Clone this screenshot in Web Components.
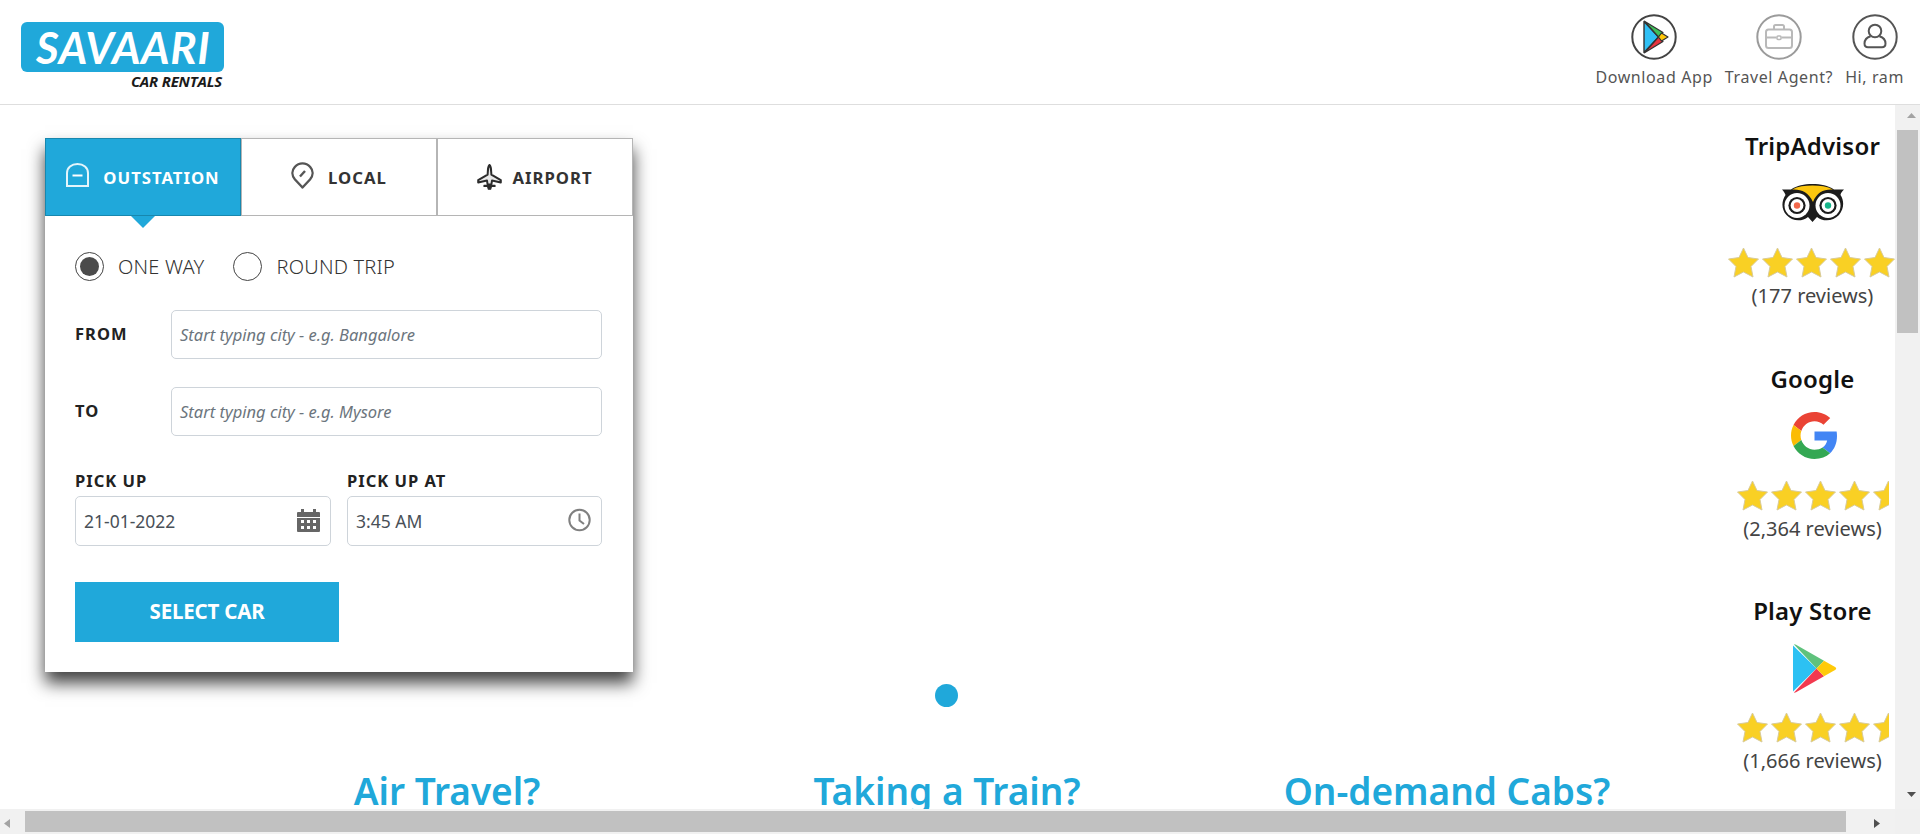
<!DOCTYPE html>
<html>
<head>
<meta charset="utf-8">
<title>Savaari Car Rentals</title>
<style>
  html, body { margin: 0; height: 100%; overflow: hidden; background: #fff; }
  body { font-family: "Noto Sans", "Open Sans", sans-serif; color: #444; }
</style>
</head>
<body>
<page-shell>
  <site-header slot="header">
    <nav-item label="Download App">
      <svg viewBox="0 0 46 46" width="46" height="46">
        <circle cx="23" cy="23" r="21.7" fill="#fff" stroke="#444" stroke-width="2"/>
        <path d="M13 7.5 L13 38.5 L27.5 23Z" fill="#2fc0f5" stroke="#333" stroke-width="1.4" stroke-linejoin="round"/>
        <path d="M13.5 7.2 L27.5 23 L32 18.4Z" fill="#3fc15a" stroke="#333" stroke-width="1.2" stroke-linejoin="round"/>
        <path d="M13.5 38.8 L27.5 23 L32 27.6Z" fill="#e8343f" stroke="#333" stroke-width="1.2" stroke-linejoin="round"/>
        <path d="M30.5 19 L37 23 L30.5 27 L27.5 23Z" fill="#ffc80a" stroke="#333" stroke-width="1.2" stroke-linejoin="round"/>
      </svg>
    </nav-item>
    <nav-item label="Travel Agent?">
      <svg viewBox="0 0 46 46" width="46" height="46" fill="none" stroke="#b9b9b9" stroke-width="2">
        <circle cx="23" cy="23" r="21.7" stroke="#9b9b9b"/>
        <rect x="10" y="15.5" width="26" height="18.5" rx="2.5"/>
        <path d="M18 15.5 v-3 a1.5 1.5 0 0 1 1.5 -1.5 h7 a1.5 1.5 0 0 1 1.5 1.5 v3"/>
        <path d="M10 23.5 h10.5 M25.5 23.5 h10.5"/>
        <rect x="21" y="22" width="4" height="3.5" rx="1" stroke-width="1.5"/>
      </svg>
    </nav-item>
    <nav-item label="Hi, ram">
      <svg viewBox="0 0 46 46" width="46" height="46" fill="none" stroke="#555" stroke-width="2">
        <circle cx="23" cy="23" r="21.7"/>
        <circle cx="23" cy="17" r="6.3"/>
        <path d="M18.6 22.3 C14.5 23.6 12.5 26.6 12.5 29.5 C12.5 32 14 33.2 16 33.2 H30 C32 33.2 33.5 32 33.5 29.5 C33.5 26.6 31.5 23.6 27.4 22.3"/>
      </svg>
    </nav-item>
  </site-header>

  <hero-area slot="main">
    <booking-card></booking-card>
    <slide-dot></slide-dot>
    <promo-row>
      <promo-title>Air Travel?</promo-title>
      <promo-title>Taking a Train?</promo-title>
      <promo-title>On-demand Cabs?</promo-title>
    </promo-row>
  </hero-area>

  <review-column slot="side">
    <review-card title-text="TripAdvisor" count="(177 reviews)" rating="5" stars-width="170">
      <svg viewBox="0 0 62 38" width="62" height="38">
        <path d="M0 5.5 H9 C15 1.5 22 0 30.5 0 C39 0 46 1.5 52 5.5 H62 C59.5 8 58.5 10 58.5 11 C62.5 17 62 25 57 31 C51 37.5 41 38 35 33 L30.5 38 L26 33 C20 38 10 37.5 4.5 31 C-1 25 -.5 17 3.5 11 C3 9.5 2 7.5 0 5.5Z" fill="#1c1c1c"/>
        <path d="M10 5.6 C16 2.5 23 1.6 30.5 1.6 C38 1.6 45 2.5 51 5.6 C42 5 35 8 31 18 C26.5 8 19 5 10 5.6Z" fill="#fcc60f"/>
        <circle cx="15" cy="21.5" r="12.5" fill="#fff"/>
        <circle cx="46" cy="21.5" r="12.5" fill="#fff"/>
        <circle cx="15" cy="21.5" r="8.6" fill="#1c1c1c"/>
        <circle cx="46" cy="21.5" r="8.6" fill="#1c1c1c"/>
        <circle cx="15" cy="21.5" r="6.4" fill="#fff"/>
        <circle cx="46" cy="21.5" r="6.4" fill="#fff"/>
        <circle cx="15" cy="21.5" r="3.2" fill="#f2674a"/>
        <circle cx="46" cy="21.5" r="3.2" fill="#17b58a"/>
      </svg>
    </review-card>
    <review-card title-text="Google" count="(2,364 reviews)" rating="4.5" stars-width="152">
      <svg viewBox="0 0 48 48" width="47" height="47" style="margin-left:4px">
        <path fill="#EA4335" d="M24 9.5c3.54 0 6.71 1.22 9.21 3.6l6.85-6.85C35.9 2.38 30.47 0 24 0 14.62 0 6.51 5.38 2.56 13.22l7.98 6.19C12.43 13.72 17.74 9.5 24 9.5z"/>
        <path fill="#4285F4" d="M46.98 24.55c0-1.57-.15-3.09-.38-4.55H24v9.02h12.94c-.58 2.96-2.26 5.48-4.78 7.18l7.73 6c4.51-4.18 7.09-10.36 7.09-17.65z"/>
        <path fill="#FBBC05" d="M10.53 28.59c-.5-1.45-.78-2.99-.78-4.59s.27-3.14.78-4.59l-7.98-6.19C.92 16.46 0 20.12 0 24c0 3.88.92 7.54 2.56 10.78l7.97-6.19z"/>
        <path fill="#34A853" d="M24 48c6.48 0 11.93-2.13 15.89-5.81l-7.73-6c-2.15 1.45-4.92 2.3-8.16 2.3-6.26 0-11.57-4.22-13.47-9.91l-7.98 6.19C6.51 42.62 14.62 48 24 48z"/>
      </svg>
    </review-card>
    <review-card title-text="Play Store" count="(1,666 reviews)" rating="4.5" stars-width="152">
      <svg viewBox="0 0 44 49" width="44" height="49" style="margin-left:4px">
        <path d="M0 1.5 V47.5 L23.5 24.5Z" fill="#2cc1f3"/>
        <path d="M1 .5 Q1.5 0 3 .8 L31 16.8 L23.5 24.5Z" fill="#5fc27c"/>
        <path d="M1 48.5 Q1.5 49 3 48.2 L31 32.2 L23.5 24.5Z" fill="#f2394f"/>
        <path d="M31 16.8 L42.5 23.3 Q44 24.5 42.5 25.7 L31 32.2 L23.5 24.5Z" fill="#ffca0a"/>
      </svg>
    </review-card>
  </review-column>

  <scroll-bar slot="vbar" orient="v"></scroll-bar>
  <scroll-bar slot="hbar" orient="h"></scroll-bar>
</page-shell>

<script>
const BLUE = '#20a8da';

class PageShell extends HTMLElement {
  shadowRoot = this.attachShadow({ mode: 'open' });

  connectedCallback() {
    this.shadowRoot.innerHTML = `
      <style>
        :host {
          display: grid;
          grid-template-columns: 1fr 25px;
          grid-template-rows: 105px 704px 25px;
          height: 834px;
          width: 1920px;
        }
        .head { grid-column: 1 / 3; }
        .main { display: flex; overflow: hidden; }
        .corner { background: #f0f0f0; }
      </style>
      <div class="head"><slot name="header"></slot></div>
      <div class="main"><slot name="main"></slot><slot name="side"></slot></div>
      <slot name="vbar"></slot>
      <slot name="hbar"></slot>
      <div class="corner"></div>
    `;
  }
}

class SiteHeader extends HTMLElement {
  shadowRoot = this.attachShadow({ mode: 'open' });

  connectedCallback() {
    this.shadowRoot.innerHTML = `
      <style>
        :host {
          display: flex;
          justify-content: space-between;
          height: 104px;
          border-bottom: 1px solid #dedede;
          box-sizing: content-box;
        }
        .logo { padding: 22px 0 0 21px; width: 204px; }
        .badge {
          height: 50px;
          width: 203px;
          box-sizing: border-box;
          padding-left: 15px;
          background: ${BLUE};
          border-radius: 6px;
          color: #fff;
          font: italic 700 44px/50px Lato, "Open Sans", sans-serif;
          letter-spacing: .6px;
          white-space: nowrap;
        }
        .sub {
          text-align: right;
          padding: 0 3px 0 0;
          color: #1a1a1a;
          font: italic 700 15px/18px "Open Sans", sans-serif;
          letter-spacing: -.2px;
        }
        nav { display: flex; gap: 12px; padding: 14px 16px 0 0; align-items: flex-start; }
      </style>
      <div class="logo">
        <div class="badge">SAVAARI</div>
        <div class="sub">CAR RENTALS</div>
      </div>
      <nav><slot></slot></nav>
    `;
  }
}

class NavItem extends HTMLElement {
  shadowRoot = this.attachShadow({ mode: 'open' });

  connectedCallback() {
    this.shadowRoot.innerHTML = `
      <style>
        :host { display: flex; flex-direction: column; align-items: center; }
        .icon { height: 46px; display: flex; }
        .label {
          margin-top: 5px;
          font-size: 16px;
          line-height: 24px;
          letter-spacing: .6px;
          color: #555;
          white-space: nowrap;
        }
      </style>
      <div class="icon"><slot></slot></div>
      <div class="label">${this.getAttribute('label')}</div>
    `;
  }
}

class HeroArea extends HTMLElement {
  shadowRoot = this.attachShadow({ mode: 'open' });

  connectedCallback() {
    this.shadowRoot.innerHTML = `
      <style>
        :host {
          display: flex;
          flex-direction: column;
          flex: none;
          width: 1730px;
          padding-top: 33px;
          box-sizing: border-box;
        }
        ::slotted(*) { flex: none; }
      </style>
      <slot></slot>
    `;
  }
}

class BookingCard extends HTMLElement {
  shadowRoot = this.attachShadow({ mode: 'open' });

  connectedCallback() {
    this.shadowRoot.innerHTML = `
      <style>
        :host {
          display: block;
          width: 588px;
          margin-left: 45px;
          background: #fff;
          box-shadow: 0 11px 16px rgba(0, 0, 0, .75);
        }
        .tabs { display: grid; grid-template-columns: repeat(3, 1fr); height: 78px; }
        .body { padding: 36px 31px 30px 30px; display: flex; flex-direction: column; }
        .radios { display: flex; gap: 13px; height: 29px; margin-bottom: 29px; }
        .city { margin-bottom: 28px; }
        .when { display: grid; grid-template-columns: 256px 255px; gap: 16px; margin-top: 7px; }
        .submit {
          margin-top: 36px;
          width: 264px;
          height: 60px;
          background: ${BLUE};
          color: #fff;
          font-size: 20.5px;
          font-weight: 700;
          line-height: 58px;
          text-align: center;
          letter-spacing: -.2px;
        }
      </style>
      <div class="tabs">
        <booking-tab active label="OUTSTATION" gap="14">
          <svg viewBox="0 0 23 24" width="23" height="24" fill="none" stroke="#e4f5fb" stroke-width="2" style="margin-top:-5px">
            <path d="M1 23 V10 C1 4.5 5.5 1 11.5 1 C17.5 1 22 4.5 22 10 V23Z"/>
            <path d="M6.5 12.5 H16.5" stroke="#fff"/>
          </svg>
        </booking-tab>
        <booking-tab label="LOCAL" gap="14">
          <svg viewBox="0 0 23 27" width="23" height="27" fill="none" stroke="#555" stroke-width="2.4" style="margin-top:-3px">
            <path d="M11.5 25.5 L4 17.5 C.6 13.5 .6 8.5 3.8 5 C8 .2 15 .2 19.2 5 C22.4 8.5 22.4 13.5 19 17.5Z" stroke-linejoin="round"/>
            <path d="M9 14.5 L14 9" stroke-width="2.4"/>
          </svg>
        </booking-tab>
        <booking-tab label="AIRPORT" gap="10">
          <svg viewBox="0 0 25 26" width="25" height="26" fill="#e8e8e8" stroke="#2c2c2c" stroke-width="2" stroke-linejoin="round" style="margin-top:-1px">
            <path d="M12.5 1 C13.8 2.5 14.2 5 14.2 8 L14.4 10.6 L23.8 16.2 V18.6 L15 16.6 L14.4 20.4 H10.6 L10 16.6 L1.2 18.6 V16.2 L10.6 10.6 L10.8 8 C10.8 5 11.2 2.5 12.5 1Z"/>
            <path d="M7 21.4 H18 V22.4 H14.5 L13.6 25.2 H11.4 L10.5 22.4 H7Z" fill="#2c2c2c" stroke-width="1.2"/>
          </svg>
        </booking-tab>
      </div>
      <div class="body">
        <div class="radios">
          <radio-option checked label="ONE WAY"></radio-option>
          <radio-option label="ROUND TRIP"></radio-option>
        </div>
        <city-field class="city" label="FROM" placeholder="Start typing city - e.g. Bangalore"></city-field>
        <city-field class="city" label="TO" placeholder="Start typing city - e.g. Mysore"></city-field>
        <div class="when">
          <date-field label="PICK UP" value="21-01-2022">
            <svg viewBox="0 0 23 24" width="23" height="24" fill="#666">
              <path d="M4 1 h3 v3 h9 v-3 h3 v3 h3 a1 1 0 0 1 1 1 v4 H0 V5 a1 1 0 0 1 1 -1 h3Z"/>
              <path fill-rule="evenodd" d="M0 10 H23 V23 a1 1 0 0 1 -1 1 H1 a1 1 0 0 1 -1 -1Z M4 12 v3 h3 v-3Z M10 12 v3 h3 v-3Z M16 12 v3 h3 v-3Z M4 18 v3 h3 v-3Z M10 18 v3 h3 v-3Z M16 18 v3 h3 v-3Z"/>
            </svg>
          </date-field>
          <date-field label="PICK UP AT" value="3:45 AM">
            <svg viewBox="0 0 23 24" width="23" height="24" fill="none" stroke="#808080" stroke-width="2">
              <circle cx="11.5" cy="12" r="10.2"/>
              <path d="M11.5 5.5 V12.5 L16 16"/>
            </svg>
          </date-field>
        </div>
        <div class="submit">SELECT CAR</div>
      </div>
    `;
  }
}

class BookingTab extends HTMLElement {
  shadowRoot = this.attachShadow({ mode: 'open' });

  connectedCallback() {
    const gap = this.getAttribute('gap');
    this.shadowRoot.innerHTML = `
      <style>
        :host {
          position: relative;
          display: flex;
          align-items: center;
          justify-content: center;
          gap: ${gap}px;
          box-sizing: border-box;
          border: 1px solid #b5b5b5;
          color: #333;
          font-size: 16.7px;
          font-weight: 700;
          letter-spacing: 1px;
        }
        :host([active]) {
          background: ${BLUE};
          border-color: #1787ae;
          color: #fff;
        }
        /* the little pointer under the active tab */
        :host([active])::after {
          content: "";
          position: absolute;
          left: 50%;
          bottom: -13px;
          margin-left: -12px;
          border: solid transparent;
          border-width: 12px 12px 0;
          border-top-color: ${BLUE};
        }
        ::slotted(svg) { display: block; }
      </style>
      <slot></slot><span>${this.getAttribute('label')}</span>
    `;
  }
}

class RadioOption extends HTMLElement {
  shadowRoot = this.attachShadow({ mode: 'open' });

  connectedCallback() {
    this.shadowRoot.innerHTML = `
      <style>
        :host {
          display: flex;
          align-items: center;
          gap: 14px;
          font-size: 20px;
          font-weight: 300;
          letter-spacing: .2px;
          color: #333;
          white-space: nowrap;
          margin-right: 16px;
        }
        .ring {
          width: 29px;
          height: 29px;
          box-sizing: border-box;
          border: 1px solid #444;
          border-radius: 50%;
          padding: 4px;
          background-clip: content-box;
        }
        :host([checked]) .ring { background-color: #4b4b4b; }
      </style>
      <div class="ring"></div><span>${this.getAttribute('label')}</span>
    `;
  }
}

const fieldBox = `
  .box {
    display: flex;
    align-items: center;
    justify-content: space-between;
    box-sizing: border-box;
    border: 1px solid #ced4da;
    border-radius: 5px;
    padding: 0 10px 0 8px;
    background: #fff;
  }
  .label { font-size: 16.5px; font-weight: 700; letter-spacing: 1px; color: #222; white-space: nowrap; }
`;

class CityField extends HTMLElement {
  shadowRoot = this.attachShadow({ mode: 'open' });

  connectedCallback() {
    this.shadowRoot.innerHTML = `
      <style>
        ${fieldBox}
        :host { display: flex; align-items: center; }
        .label { width: 96px; flex: none; margin-top: -2px; }
        .box { flex: 1; height: 49px; font-size: 16.5px; font-style: italic; color: #6c757d; }
      </style>
      <span class="label">${this.getAttribute('label')}</span>
      <div class="box"><span>${this.getAttribute('placeholder')}</span></div>
    `;
  }
}

class DateField extends HTMLElement {
  shadowRoot = this.attachShadow({ mode: 'open' });

  connectedCallback() {
    this.shadowRoot.innerHTML = `
      <style>
        ${fieldBox}
        :host { display: block; }
        .label { line-height: 20px; margin-bottom: 5px; display: block; }
        .box { height: 50px; font-size: 17.5px; color: #495057; }
        ::slotted(svg) { display: block; margin-top: -2px; }
      </style>
      <span class="label">${this.getAttribute('label')}</span>
      <div class="box"><span>${this.getAttribute('value')}</span><slot></slot></div>
    `;
  }
}

class SlideDot extends HTMLElement {
  shadowRoot = this.attachShadow({ mode: 'open' });

  connectedCallback() {
    this.shadowRoot.innerHTML = `
      <style>
        :host { display: block; margin: 12px 0 0 935px; width: 23px; height: 23px; border-radius: 50%; background: ${BLUE}; }
      </style>
    `;
  }
}

class PromoRow extends HTMLElement {
  shadowRoot = this.attachShadow({ mode: 'open' });

  connectedCallback() {
    this.shadowRoot.innerHTML = `
      <style>
        :host { display: grid; grid-template-columns: repeat(3, 500px); padding-left: 197px; margin-top: 62px; }
      </style>
      <slot></slot>
    `;
  }
}

class PromoTitle extends HTMLElement {
  shadowRoot = this.attachShadow({ mode: 'open' });

  connectedCallback() {
    this.shadowRoot.innerHTML = `
      <style>
        :host {
          display: block;
          text-align: center;
          color: ${BLUE};
          font-size: 37px;
          font-weight: 600;
          line-height: 44px;
          white-space: nowrap;
        }
      </style>
      <slot></slot>
    `;
  }
}

class ReviewColumn extends HTMLElement {
  shadowRoot = this.attachShadow({ mode: 'open' });

  connectedCallback() {
    this.shadowRoot.innerHTML = `
      <style>
        :host { display: flex; flex-direction: column; flex: none; width: 165px; padding-top: 27px; }
      </style>
      <slot></slot>
    `;
  }
}

class ReviewCard extends HTMLElement {
  shadowRoot = this.attachShadow({ mode: 'open' });

  connectedCallback() {
    const rating = parseFloat(this.getAttribute('rating'));
    const width = this.getAttribute('stars-width');
    this.shadowRoot.innerHTML = `
      <style>
        :host { display: flex; flex-direction: column; align-items: center; height: 232.5px; flex: none; }
        h3 { margin: -1px 0 1px; font-size: 24px; font-weight: 600; line-height: 30px; letter-spacing: .2px; color: #111; white-space: nowrap; }
        .logo { height: 82px; margin-bottom: 3px; display: flex; align-items: center; }
        .stars { display: flex; gap: 3px; height: 31px; flex: none; width: ${width}px; overflow: hidden; justify-content: flex-start; }
        .stars svg { flex: none; }
        .count { margin-top: 6px; font-size: 20px; line-height: 24px; color: #444; white-space: nowrap; }
        ::slotted(svg) { display: block; }
      </style>
      <h3>${this.getAttribute('title-text')}</h3>
      <div class="logo"><slot></slot></div>
      <div class="stars">${this.starMarkup(rating)}</div>
      <div class="count">${this.getAttribute('count')}</div>
    `;
  }

  starMarkup(rating) {
    const star = `
      <svg viewBox="0 0 31 31" width="31" height="31">
        <path d="M15.5 1 L20 10.5 L30.5 12 L23 19.5 L25 30 L15.5 25 L6 30 L8 19.5 L.5 12 L11 10.5Z"
          fill="#f9d024" stroke="#d8cb9a" stroke-width="1" stroke-linejoin="round"/>
      </svg>`;
    return star.repeat(Math.ceil(rating));
  }
}

class ScrollBar extends HTMLElement {
  shadowRoot = this.attachShadow({ mode: 'open' });

  connectedCallback() {
    const vertical = this.getAttribute('orient') === 'v';
    this.shadowRoot.innerHTML = `
      <style>
        :host { display: flex; background: #f1f1f1; flex-direction: ${vertical ? 'column' : 'row'}; }
        .arrow { flex: none; width: 25px; height: 25px; display: flex; align-items: center; justify-content: center; }
        .thumb { flex: none; background: #c1c1c1; }
        .rest { flex: 1; }
        ${vertical
          ? '.thumb { height: 203px; margin: 0 2px; } '
          : '.thumb { width: 1821px; margin: 2px 0; } '}
      </style>
      <div class="arrow">${this.arrow(vertical ? 'up' : 'left', '#a3a3a3')}</div>
      <div class="thumb"></div>
      <div class="rest"></div>
      <div class="arrow">${this.arrow(vertical ? 'down' : 'right', '#505050')}</div>
    `;
  }

  arrow(dir, color) {
    const shapes = {
      up: 'M5 3 L9.5 -2 L14 3Z',
      down: 'M5 -2 L14 -2 L9.5 3Z',
      left: 'M3 0 L-3 4.5 L3 9Z',
      right: 'M-3 0 L3 4.5 L-3 9Z',
    };
    return `<svg viewBox="-4 -3 20 12" width="20" height="12"><path d="${shapes[dir]}" fill="${color}"/></svg>`;
  }
}

customElements.define('page-shell', PageShell);
customElements.define('site-header', SiteHeader);
customElements.define('nav-item', NavItem);
customElements.define('hero-area', HeroArea);
customElements.define('booking-card', BookingCard);
customElements.define('booking-tab', BookingTab);
customElements.define('radio-option', RadioOption);
customElements.define('city-field', CityField);
customElements.define('date-field', DateField);
customElements.define('slide-dot', SlideDot);
customElements.define('promo-row', PromoRow);
customElements.define('promo-title', PromoTitle);
customElements.define('review-column', ReviewColumn);
customElements.define('review-card', ReviewCard);
customElements.define('scroll-bar', ScrollBar);
</script>
</body>
</html>
